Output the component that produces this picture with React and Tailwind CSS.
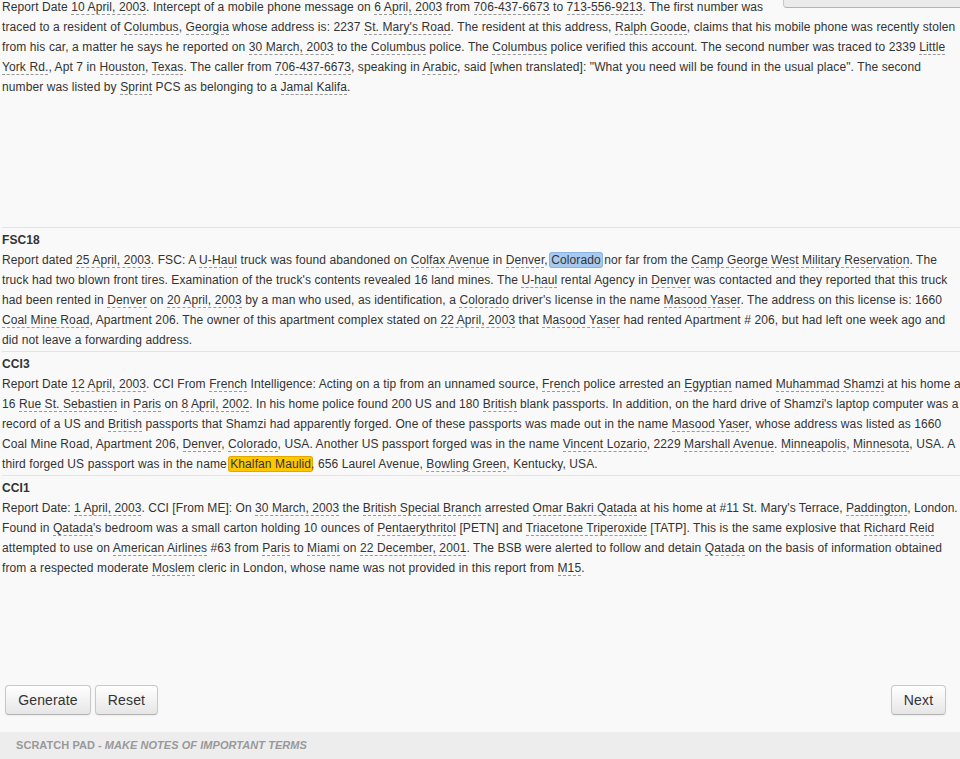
import React from "react";

const U = ({ children }) => (
  <span className="border-b border-dashed border-[#999]">{children}</span>
);

const Sec = ({ title, children }) => (
  <div className="border-t border-[#e3e3e3] pt-[2px] pb-[1px]">
    <div className="font-bold">{title}</div>
    <div>{children}</div>
  </div>
);

const Btn = ({ children, className = "" }) => (
  <button
    className={
      "h-[30px] rounded-[4px] border border-[#c8c8c8] border-b-[#b3b3b3] bg-gradient-to-b from-white to-[#e6e6e6] text-[14px] leading-[20px] tracking-[0.15px] text-[#333] text-center shadow-[inset_0_1px_0_rgba(255,255,255,0.2),0_1px_2px_rgba(0,0,0,0.05)] " +
      className
    }
  >
    {children}
  </button>
);

export default function App() {
  return (
    <div
      className="w-[960px] h-[759px] overflow-hidden bg-[#f9f9f9] flex flex-col text-[#333]"
      style={{ fontFamily: '"Liberation Sans", Arial, sans-serif' }}
    >
      <div className="flex-1 min-h-0 w-[990px] text-[12px] leading-[20px] tracking-[0.1px] pl-[2px]">
        <div className="h-[230px] -mt-[3px]">
          <div className="float-right h-[11px] w-[207px] rounded-b-[4px] border border-t-0 border-[#c8c8c8] border-b-[#b3b3b3] bg-[#ebebeb]" />
          Report Date <U>10 April, 2003</U>. Intercept of a mobile phone message on <U>6 April, 2003</U> from{" "}
          <U>706-437-6673</U> to <U>713-556-9213</U>. The first number was
          <br />
          traced to a resident of <U>Columbus</U>, <U>Georgia</U> whose address is: 2237 <U>St. Mary's Road</U>. The
          resident at this address, <U>Ralph Goode</U>, claims that his mobile phone was recently stolen
          <br />
          from his car, a matter he says he reported on <U>30 March, 2003</U> to the <U>Columbus</U> police. The{" "}
          <U>Columbus</U> police verified this account. The second number was traced to 2339 <U>Little</U>
          <br />
          <U>York Rd.</U>, Apt 7 in <U>Houston</U>, <U>Texas</U>. The caller from <U>706-437-6673</U>, speaking in{" "}
          <U>Arabic</U>, said [when translated]: "What you need will be found in the usual place". The second
          <br />
          number was listed by <U>Sprint</U> PCS as belonging to a <U>Jamal Kalifa</U>.
        </div>

        <Sec title="FSC18">
          Report dated <U>25 April, 2003</U>. FSC: A <U>U-Haul</U> truck was found abandoned on <U>Colfax Avenue</U> in{" "}
          <U>Denver</U>,{" "}
          <span className="bg-[#a9caf0] border border-[#8db3e2] rounded-[3px] px-[1px] -mx-[2px]">Colorado</span> nor far
          from the <U>Camp George West Military Reservation</U>. The
          <br />
          truck had two blown front tires. Examination of the truck's contents revealed 16 land mines. The <U>U-haul</U>{" "}
          rental Agency in <U>Denver</U> was contacted and they reported that this truck
          <br />
          had been rented in <U>Denver</U> on <U>20 April, 2003</U> by a man who used, as identification, a{" "}
          <U>Colorado</U> driver's license in the name <U>Masood Yaser</U>. The address on this license is: 1660
          <br />
          <U>Coal Mine Road</U>, Apartment 206. The owner of this apartment complex stated on <U>22 April, 2003</U> that{" "}
          <U>Masood Yaser</U> had rented Apartment # 206, but had left one week ago and
          <br />
          did not leave a forwarding address.
        </Sec>

        <Sec title="CCI3">
          Report Date <U>12 April, 2003</U>. CCI From <U>French</U> Intelligence: Acting on a tip from an unnamed source,{" "}
          <U>French</U> police arrested an <U>Egyptian</U> named <U>Muhammad Shamzi</U> at his home at
          <br />
          <span className="tracking-[0.08px]">
            16 <U>Rue St. Sebastien</U> in <U>Paris</U> on <U>8 April, 2002</U>. In his home police found 200 US and 180{" "}
            <U>British</U> blank passports. In addition, on the hard drive of Shamzi's laptop computer was a
          </span>
          <br />
          record of a US and <U>British</U> passports that Shamzi had apparently forged. One of these passports was made
          out in the name <U>Masood Yaser</U>, whose address was listed as 1660
          <br />
          Coal Mine Road, Apartment 206, <U>Denver</U>, <U>Colorado</U>, USA. Another US passport forged was in the name{" "}
          <U>Vincent Lozario</U>, 2229 <U>Marshall Avenue</U>. <U>Minneapolis</U>, <U>Minnesota</U>, USA. A
          <br />
          third forged US passport was in the name{" "}
          <span className="bg-[#ffc700] border border-[#e0a800] rounded-[3px] px-[1px] -mx-[2px]">Khalfan Maulid</span>,
          656 Laurel Avenue, <U>Bowling Green</U>, Kentucky, USA.
        </Sec>

        <Sec title="CCI1">
          <span className="tracking-[0.05px]">
            Report Date: <U>1 April, 2003</U>. CCI [From ME]: On <U>30 March, 2003</U> the{" "}
            <U>British Special Branch</U> arrested <U>Omar Bakri Qatada</U> at his home at #11 St. Mary's Terrace,{" "}
            <U>Paddington</U>, London.
          </span>
          <br />
          Found in <U>Qatada</U>'s bedroom was a small carton holding 10 ounces of <U>Pentaerythritol</U> [PETN] and{" "}
          <U>Triacetone Triperoxide</U> [TATP]. This is the same explosive that <U>Richard Reid</U>
          <br />
          attempted to use on <U>American Airlines</U> #63 from <U>Paris</U> to <U>Miami</U> on{" "}
          <U>22 December, 2001</U>. The BSB were alerted to follow and detain <U>Qatada</U> on the basis of information
          obtained
          <br />
          from a respected moderate <U>Moslem</U> cleric in London, whose name was not provided in this report from{" "}
          <U>M15</U>.
        </Sec>
      </div>

      <div className="h-[30px] mb-[17px] px-[5px] flex justify-between">
        <div className="flex gap-[4px]">
          <Btn className="w-[86px]">Generate</Btn>
          <Btn className="w-[63px]">Reset</Btn>
        </div>
        <Btn className="w-[55px] mr-[9px]">Next</Btn>
      </div>

      <div className="h-[27px] bg-[#ededed] pl-[16px] flex items-center text-[11px] font-bold tracking-[0.05px] text-[#999]">
        SCRATCH PAD - <i className="ml-[3px]">MAKE NOTES OF IMPORTANT TERMS</i>
      </div>
    </div>
  );
}
